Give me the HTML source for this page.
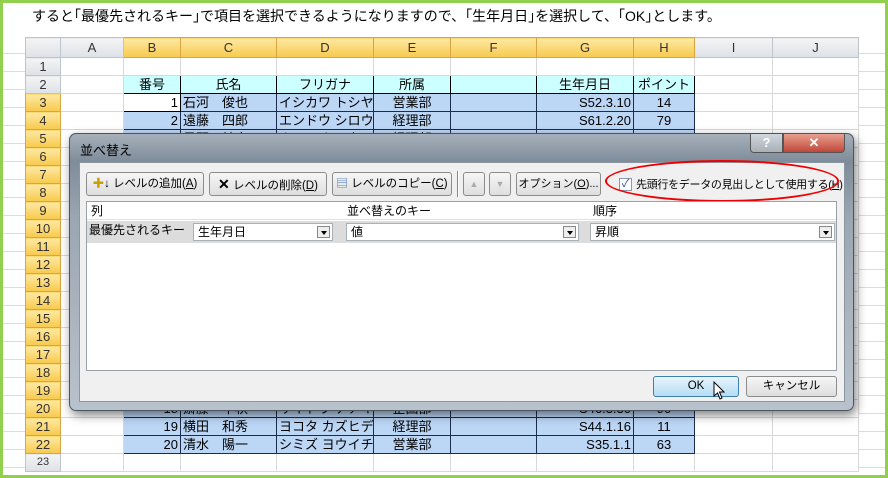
<!DOCTYPE html>
<html><head><meta charset="utf-8"><style>
*{box-sizing:border-box;margin:0;padding:0}
body{width:888px;height:478px;overflow:hidden;position:relative;background:#fff;font-family:"Liberation Sans","Noto Sans CJK JP",sans-serif;font-size:13px;color:#000}
.frame{position:absolute;inset:0;border:3px solid #8fd14f;z-index:50;pointer-events:none}
.bggrid{position:absolute;left:0;top:0;width:888px;height:478px;background-image:repeating-linear-gradient(to bottom,transparent 0,transparent 17px,#dcdcdc 17px,#dcdcdc 18px);}
.top{position:absolute;left:0;top:0;width:888px;height:36px;background:#fff}
.toptext{position:absolute;left:32px;top:6px;font-size:14px;white-space:nowrap}
table{position:absolute;left:25px;top:37px;width:833px;border-collapse:collapse;table-layout:fixed;border:1px solid #6a8fc8;background:#fff}
td{border:1px solid #d8d8d8;height:18px;padding:0 2px;font-size:13px;white-space:nowrap;overflow:hidden;line-height:16px}
tr.h td{height:20px;background:linear-gradient(#f4f4f4,#dde1e6);text-align:center;border-color:#bcc4cc;color:#333}
tr.h td.s{background:linear-gradient(#fde9a3,#f8c94d);border-color:#d9a441}
td.rn{background:linear-gradient(#f4f4f4,#dde1e6);text-align:center;border-color:#bcc4cc;color:#333;padding:0}
td.rs{background:linear-gradient(#fde9a3,#f8c94d);border-color:#d9a441}
tr.hd td.c{background:#ccffff;border:1px solid #000;text-align:center}
td.d{background:#bcd6f6;border:1px solid #1c2c4c}
td.w{background:#fff;border:1px solid #000}
.r{text-align:right}.c{text-align:center}
.dlg{position:absolute;left:69px;top:133px;width:785px;height:278px;border-radius:7px;border:1px solid #4a5560;background:linear-gradient(180deg,#a6b0bb 0,#7f8c99 10%,#9aa6b2 30%,#b8c2cc 100%);box-shadow:2px 4px 10px rgba(0,0,0,.5);z-index:10}
.title{position:absolute;left:10px;top:6px;font-size:13px}
.body{position:absolute;left:9px;top:28px;width:766px;height:240px;background:#f0f0f0;border:1px solid #8a96a2}
.btn{position:absolute;height:24px;border:1px solid #8c8c8c;border-radius:3px;background:linear-gradient(#f6f6f6,#dedede);font-size:11.5px;line-height:22px;text-align:center;white-space:nowrap}
.grid{position:absolute;left:6px;top:38px;width:751px;height:170px;background:#fff;border:1px solid #9aa0a8}
.gh{position:absolute;top:0;height:18px;font-size:12px;line-height:18px}
.sel{position:absolute;height:18px;background:#fff;border:1px solid #a8b0b8;font-size:12px;line-height:16px;padding-left:4px}
.arr{position:absolute;right:2px;top:2px;width:13px;height:12px;border:1px solid #888;background:#eee}
.arr:after{content:"";position:absolute;left:3px;top:4px;border-left:3px solid transparent;border-right:3px solid transparent;border-top:4px solid #000}
</style></head><body>
<div class="bggrid"></div>
<div class="top"><div class="toptext">すると｢最優先されるキー｣で項目を選択できるようになりますので、｢生年月日｣を選択して、｢OK｣とします。</div></div>
<table>
<colgroup><col style="width:35px"><col style="width:63px"><col style="width:57px"><col style="width:96px"><col style="width:97px"><col style="width:77px"><col style="width:86px"><col style="width:97px"><col style="width:61px"><col style="width:78px"><col style="width:86px"></colgroup>
<tr class="h"><td></td><td>A</td><td class="s">B</td><td class="s">C</td><td class="s">D</td><td class="s">E</td><td class="s">F</td><td class="s">G</td><td class="s">H</td><td>I</td><td>J</td></tr>
<tr><td class="rn">1</td><td></td><td></td><td></td><td></td><td></td><td></td><td></td><td></td><td></td><td></td></tr>
<tr class="hd"><td class="rn">2</td><td></td><td class="c">番号</td><td class="c">氏名</td><td class="c">フリガナ</td><td class="c">所属</td><td class="c"></td><td class="c">生年月日</td><td class="c">ポイント</td><td></td><td></td></tr>
<tr><td class="rn rs">3</td><td></td><td class="w r">1</td><td class="d">石河　俊也</td><td class="d">イシカワ トシヤ</td><td class="d c">営業部</td><td class="d"></td><td class="d r">S52.3.10</td><td class="d c">14</td><td></td><td></td></tr>
<tr><td class="rn rs">4</td><td></td><td class="d r">2</td><td class="d">遠藤　四郎</td><td class="d">エンドウ シロウ</td><td class="d c">経理部</td><td class="d"></td><td class="d r">S61.2.20</td><td class="d c">79</td><td></td><td></td></tr>
<tr><td class="rn rs">5</td><td></td><td class="d r">3</td><td class="d">星野　健太</td><td class="d">ホシノ ケンタ</td><td class="d c">経理部</td><td class="d"></td><td class="d r"></td><td class="d c"></td><td></td><td></td></tr>
<tr><td class="rn rs">6</td><td></td><td class="d"></td><td class="d"></td><td class="d"></td><td class="d"></td><td class="d"></td><td class="d"></td><td class="d"></td><td></td><td></td></tr>
<tr><td class="rn rs">7</td><td></td><td class="d"></td><td class="d"></td><td class="d"></td><td class="d"></td><td class="d"></td><td class="d"></td><td class="d"></td><td></td><td></td></tr>
<tr><td class="rn rs">8</td><td></td><td class="d"></td><td class="d"></td><td class="d"></td><td class="d"></td><td class="d"></td><td class="d"></td><td class="d"></td><td></td><td></td></tr>
<tr><td class="rn rs">9</td><td></td><td class="d"></td><td class="d"></td><td class="d"></td><td class="d"></td><td class="d"></td><td class="d"></td><td class="d"></td><td></td><td></td></tr>
<tr><td class="rn rs">10</td><td></td><td class="d"></td><td class="d"></td><td class="d"></td><td class="d"></td><td class="d"></td><td class="d"></td><td class="d"></td><td></td><td></td></tr>
<tr><td class="rn rs">11</td><td></td><td class="d"></td><td class="d"></td><td class="d"></td><td class="d"></td><td class="d"></td><td class="d"></td><td class="d"></td><td></td><td></td></tr>
<tr><td class="rn rs">12</td><td></td><td class="d"></td><td class="d"></td><td class="d"></td><td class="d"></td><td class="d"></td><td class="d"></td><td class="d"></td><td></td><td></td></tr>
<tr><td class="rn rs">13</td><td></td><td class="d"></td><td class="d"></td><td class="d"></td><td class="d"></td><td class="d"></td><td class="d"></td><td class="d"></td><td></td><td></td></tr>
<tr><td class="rn rs">14</td><td></td><td class="d"></td><td class="d"></td><td class="d"></td><td class="d"></td><td class="d"></td><td class="d"></td><td class="d"></td><td></td><td></td></tr>
<tr><td class="rn rs">15</td><td></td><td class="d"></td><td class="d"></td><td class="d"></td><td class="d"></td><td class="d"></td><td class="d"></td><td class="d"></td><td></td><td></td></tr>
<tr><td class="rn rs">16</td><td></td><td class="d"></td><td class="d"></td><td class="d"></td><td class="d"></td><td class="d"></td><td class="d"></td><td class="d"></td><td></td><td></td></tr>
<tr><td class="rn rs">17</td><td></td><td class="d"></td><td class="d"></td><td class="d"></td><td class="d"></td><td class="d"></td><td class="d"></td><td class="d"></td><td></td><td></td></tr>
<tr><td class="rn rs">18</td><td></td><td class="d"></td><td class="d"></td><td class="d"></td><td class="d"></td><td class="d"></td><td class="d"></td><td class="d"></td><td></td><td></td></tr>
<tr><td class="rn rs">19</td><td></td><td class="d"></td><td class="d"></td><td class="d"></td><td class="d"></td><td class="d"></td><td class="d"></td><td class="d"></td><td></td><td></td></tr>
<tr><td class="rn rs">20</td><td></td><td class="d r">18</td><td class="d">斎藤　千秋</td><td class="d">サイトウ チアキ</td><td class="d c">企画部</td><td class="d"></td><td class="d r">S46.3.30</td><td class="d c">90</td><td></td><td></td></tr>
<tr><td class="rn rs">21</td><td></td><td class="d r">19</td><td class="d">横田　和秀</td><td class="d">ヨコタ カズヒデ</td><td class="d c">経理部</td><td class="d"></td><td class="d r">S44.1.16</td><td class="d c">11</td><td></td><td></td></tr>
<tr><td class="rn rs">22</td><td></td><td class="d r">20</td><td class="d">清水　陽一</td><td class="d">シミズ ヨウイチ</td><td class="d c">営業部</td><td class="d"></td><td class="d r">S35.1.1</td><td class="d c">63</td><td></td><td></td></tr>
<tr><td class="rn" style="height:13px;font-size:11px;line-height:11px">23</td><td style="height:13px"></td><td></td><td></td><td></td><td></td><td></td><td></td><td></td><td></td><td></td></tr>
</table>

<div class="dlg">
 <div class="title">並べ替え</div>
 <div style="position:absolute;right:70px;top:0;width:33px;height:19px;border:1px solid #555;border-top:none;border-radius:0 0 0 4px;background:linear-gradient(#d0d6dc,#a8b0b8);text-align:center;color:#fff;font-weight:bold;font-size:13px;line-height:18px">?</div>
 <div style="position:absolute;right:8px;top:0;width:62px;height:19px;border:1px solid #555;border-top:none;border-radius:0 0 4px 0;background:linear-gradient(#e8a090,#c0483a);text-align:center;color:#fff;font-weight:bold;font-size:13px;line-height:18px">✕</div>
 <div class="body">
  <div class="btn" style="left:6px;top:9px;width:118px"><span style="color:#c8a000">✚</span>↓ レベルの追加(<u>A</u>)</div>
  <div class="btn" style="left:129px;top:9px;width:118px"><b style="font-size:14px">✕</b> レベルの削除(<u>D</u>)</div>
  <div class="btn" style="left:252px;top:9px;width:120px"><span style="color:#3a6ab0">▤</span> レベルのコピー(<u>C</u>)</div>
  <div style="position:absolute;left:377px;top:8px;width:2px;height:26px;border-left:1px solid #888;border-right:1px solid #fff"></div>
  <div class="btn" style="left:383px;top:9px;width:22px;color:#aaa;font-size:9px">▲</div>
  <div class="btn" style="left:409px;top:9px;width:22px;color:#aaa;font-size:9px">▼</div>
  <div class="btn" style="left:436px;top:9px;width:85px;font-size:11px">オプション(<u>O</u>)...</div>
  <div style="position:absolute;left:539px;top:15px;width:13px;height:13px;border:1px solid #8a9aae;background:#fff;font-size:11px;line-height:11px;text-align:center;color:#2a4a9a">✓</div>
  <div style="position:absolute;left:556px;top:13px;font-size:11px;letter-spacing:-0.3px;white-space:nowrap">先頭行をデータの見出しとして使用する(<u>H</u>)</div>
  <div style="position:absolute;left:525px;top:-3px;width:234px;height:42px;border:2px solid #e00;border-radius:50%"></div>
  <div class="grid">
   <div style="position:absolute;left:0;top:0;width:749px;height:18px;border-bottom:1px solid #e0e0e0"></div>
   <div class="gh" style="left:4px">列</div>
   <div class="gh" style="left:260px">並べ替えのキー</div>
   <div class="gh" style="left:506px">順序</div>
   <div style="position:absolute;left:0;top:19px;width:749px;height:22px;background:#dcdcdc"></div>
   <div class="gh" style="left:2px;top:19px">最優先されるキー</div>
   <div class="sel" style="left:106px;top:21px;width:140px">生年月日<div class="arr"></div></div>
   <div class="sel" style="left:259px;top:21px;width:233px">値<div class="arr"></div></div>
   <div class="sel" style="left:503px;top:21px;width:245px">昇順<div class="arr"></div></div>
  </div>
  <div class="btn" style="left:573px;top:213px;width:86px;height:21px;line-height:19px;border-color:#3c7fb1;background:linear-gradient(#e8f4fc,#b4dcf4)">OK</div>
  <div class="btn" style="left:666px;top:213px;width:91px;height:21px;line-height:19px">キャンセル</div>
  <svg style="position:absolute;left:633px;top:218px" width="14" height="20" viewBox="0 0 14 20"><path d="M1 1 L1 15 L4.5 12 L7 18 L9 17 L6.5 11 L11 11 Z" fill="#fff" stroke="#000" stroke-width="1"/></svg>
 </div>
</div>
<div class="frame"></div>
</body></html>
